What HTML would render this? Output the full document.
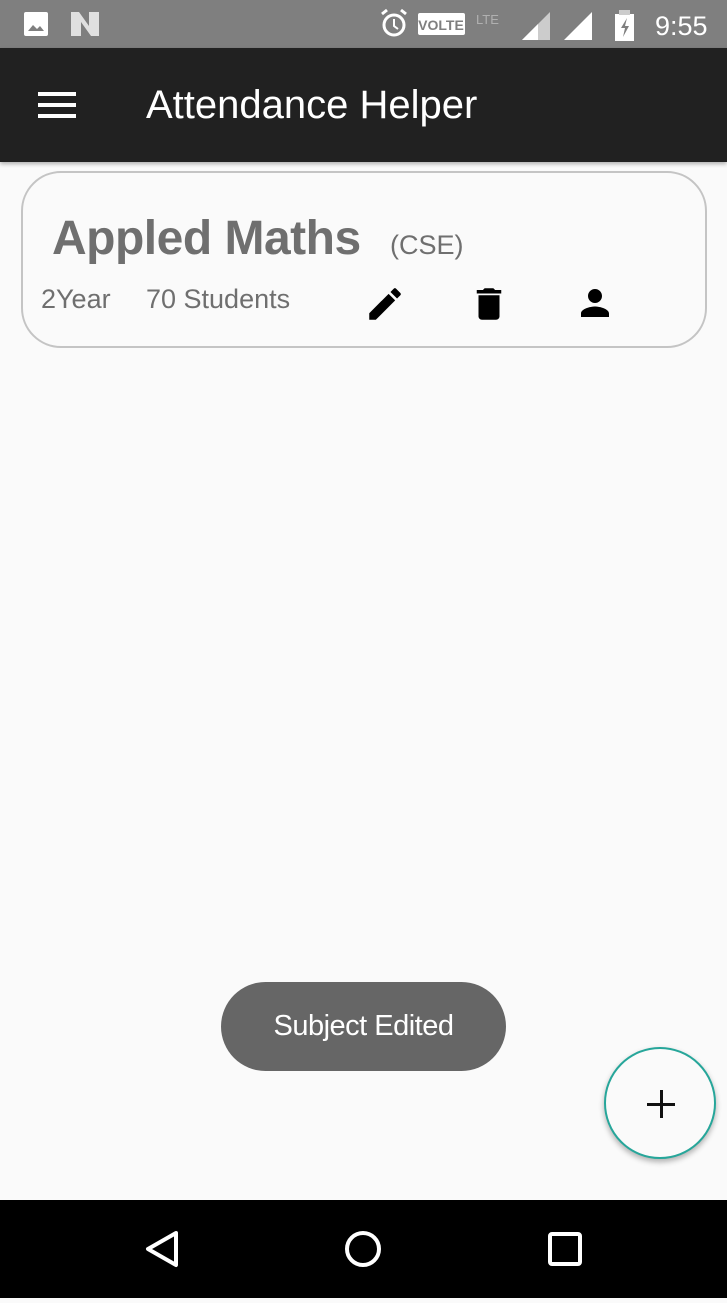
<!DOCTYPE html>
<html><head><style>
body{margin:0;width:727px;height:1298px;background:#fafafa;font-family:"Liberation Sans",sans-serif;position:relative;overflow:hidden}
.sb{position:absolute;top:0;left:0;width:727px;height:48px;background:#7f7f7f}
.tb{position:absolute;top:48px;left:0;width:727px;height:114px;background:#212121;box-shadow:0 2px 4px rgba(0,0,0,.3)}
.card{position:absolute;left:21px;top:171px;width:686px;height:177px;border:2px solid #c4c4c4;border-radius:40px;box-sizing:border-box}
.nav{position:absolute;top:1200px;left:0;width:727px;height:98px;background:#000}
</style></head><body>
<div class="sb">
<svg width="727" height="48" style="position:absolute;left:0;top:0">
<rect x="24" y="12" width="24" height="24" rx="2" fill="#fff"/><path d="M28 31l5-6 4 4 3-3 4 5z" fill="#7f7f7f"/>
<path d="M71 12h8l10 14V12h10v24h-8L81 22v14H71z" fill="#e0e0e0"/>
<circle cx="394" cy="25" r="10" fill="none" stroke="#fff" stroke-width="3"/><path d="M394 19v7l4 3" stroke="#fff" stroke-width="2" fill="none"/><path d="M382 14l5-4M406 14l-5-4" stroke="#fff" stroke-width="3"/>
<rect x="418" y="13" width="47" height="22" rx="2" fill="#fff"/><text x="441" y="30" font-size="14" font-weight="bold" text-anchor="middle" fill="#7f7f7f">VOLTE</text>
<text x="476" y="24" font-size="13" fill="#b0b0b0">LTE</text>
<path d="M522 40L550 12V40z" fill="#fff" opacity=".6"/><path d="M522 40L538 24V40z" fill="#fff"/>
<path d="M564 40L592 12V40z" fill="#fff"/>
<rect x="615" y="14" width="19" height="27" fill="#fff"/><rect x="619" y="10" width="11" height="5" fill="#ccc"/><path d="M627 18l-6 10h4l-2 9 6-11h-4z" fill="#7f7f7f"/>
<text x="655" y="35" font-size="27" fill="#fff">9:55</text>
</svg></div>
<div class="tb">
<div style="position:absolute;left:38px;top:44px;width:38px;height:4px;background:#fff;box-shadow:0 11px 0 #fff,0 22px 0 #fff"></div>
<div style="position:absolute;left:146px;top:35px;font-size:40px;color:#fff">Attendance Helper</div>
</div>
<div class="card">
<div style="position:absolute;left:29px;top:38px;font-size:48px;font-weight:bold;color:#6f6f6f;letter-spacing:-0.5px">Appled Maths</div>
<div style="position:absolute;left:367px;top:57px;font-size:27px;color:#6f6f6f">(CSE)</div>
<div style="position:absolute;left:18px;top:111px;font-size:27px;color:#6f6f6f">2Year</div>
<div style="position:absolute;left:123px;top:111px;font-size:27px;color:#6f6f6f">70 Students</div>
<svg style="position:absolute;left:341px;top:110px" width="42" height="42" viewBox="0 0 24 24"><path d="M3 17.25V21h3.75L17.81 9.94l-3.75-3.75L3 17.25zM20.71 7.04a1 1 0 000-1.41l-2.34-2.34a1 1 0 00-1.41 0l-1.830 1.83 3.75 3.75 1.83-1.83z"/></svg>
<svg style="position:absolute;left:445px;top:110px" width="42" height="42" viewBox="0 0 24 24"><path d="M6 19c0 1.1.9 2 2 2h8c1.1 0 2-.9 2-2V7H6v12zM19 4h-3.5l-1-1h-5l-1 1H5v2h14V4z"/></svg>
<svg style="position:absolute;left:551px;top:109px" width="42" height="42" viewBox="0 0 24 24"><path d="M12 12c2.21 0 4-1.79 4-4s-1.790-4-4-4-4 1.79-4 4 1.79 4 4 4zm0 2c-2.67 0-8 1.34-8 4v2h16v-2c0-2.66-5.33-4-8-4z"/></svg>
</div>
<div style="position:absolute;left:221px;top:982px;width:285px;height:89px;border-radius:45px;background:#666;color:#fff;font-size:29px;text-align:center;line-height:89px;letter-spacing:-0.5px">Subject Edited</div>
<div style="position:absolute;left:604px;top:1047px;width:112px;height:112px;border-radius:50%;background:#fafafa;border:2px solid #26a69a;box-shadow:0 3px 6px rgba(0,0,0,.3);box-sizing:border-box">
<div style="position:absolute;left:41px;top:54px;width:28px;height:3px;background:#111"></div>
<div style="position:absolute;left:54px;top:41px;width:3px;height:28px;background:#111"></div>
</div>
<div class="nav">
<svg width="727" height="98">
<path d="M176 33L148 49L176 65z" fill="none" stroke="#fff" stroke-width="4" stroke-linejoin="round"/>
<circle cx="363" cy="49" r="16" fill="none" stroke="#fff" stroke-width="4"/>
<rect x="550" y="34" width="30" height="30" rx="2" fill="none" stroke="#fff" stroke-width="4"/>
</svg></div>
</body></html>
